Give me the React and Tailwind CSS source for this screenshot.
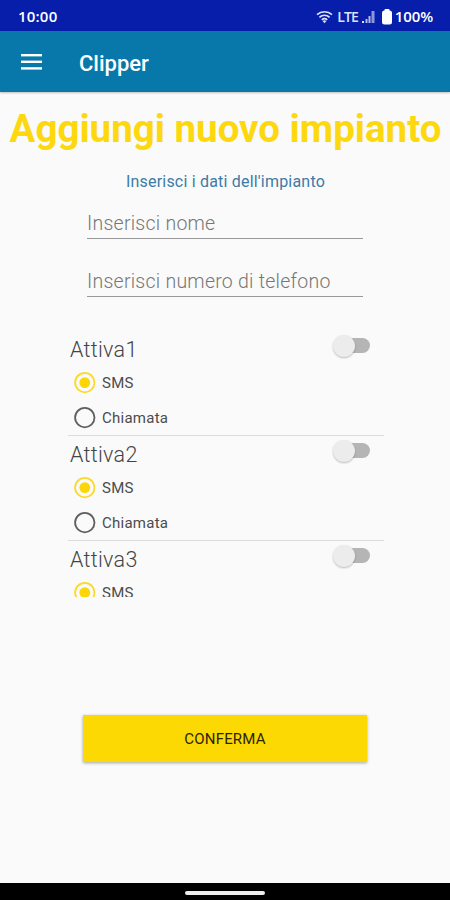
import { useState } from "react";

const fields = [
  { id: "nome", placeholder: "Inserisci nome" },
  { id: "telefono", placeholder: "Inserisci numero di telefono" },
];

const outputs = ["Attiva1", "Attiva2", "Attiva3"];

const StatusBar = () => (
  <div className="flex h-[31px] shrink-0 items-center bg-[#071eab] pt-[2px] pr-[17px] pl-[18px] font-['Open_Sans',sans-serif] text-[15px] font-semibold text-white">
    <span className="tracking-[0.2px]">10:00</span>
    <div className="ml-auto flex items-center">
      <svg className="h-[14px] w-[17px]" viewBox="0 0 17 14" fill="none">
        <path
          d="M1 4.6C5.2 .8 11.8 .8 16 4.6M3.4 7.3C6.4 4.7 10.6 4.7 13.6 7.3M5.8 9.8C7.4 8.5 9.6 8.5 11.2 9.8"
          stroke="#dfe2f8"
          strokeWidth="1.7"
        />
        <path d="M6.6 11L8.5 13.2L10.4 11Q8.5 9.6 6.6 11Z" fill="#dfe2f8" />
      </svg>
      <span className="ml-[4px] text-[14px] tracking-[-1px] text-[#dfe2f8]">
        LTE
      </span>
      <svg className="ml-[4px] h-[14px] w-[13px]" viewBox="0 0 13 14">
        <path d="M0 11h2v2H0z" fill="#dfe2f8" />
        <path d="M3.5 9h2v4h-2zM6.5 6h2v7h-2z" fill="#b4baec" />
        <path d="M9.5 1h3v12h-3z" fill="#8e96de" />
      </svg>
      <svg className="ml-[7px] h-[16px] w-[10px]" viewBox="0 0 10 16">
        <rect x="2.5" y="0" width="5" height="3" rx="1" fill="white" />
        <rect x="0" y="1.5" width="10" height="14" rx="2.5" fill="white" />
      </svg>
      <span className="ml-[3px] tracking-[-0.1px]">100%</span>
    </div>
  </div>
);

const AppBar = () => (
  <header className="flex h-[61px] shrink-0 items-center bg-[#0778a9] pl-[21px] shadow-[0_1px_2px_rgba(0,0,0,0.25)]">
    <button type="button" aria-label="Menu">
      <svg className="h-[16px] w-[21px]" viewBox="0 0 21 16" fill="white">
        <rect y="0" width="21" height="2.4" />
        <rect y="6.6" width="21" height="2.4" />
        <rect y="13.2" width="21" height="2.4" />
      </svg>
    </button>
    <h1 className="mt-[3px] ml-[37px] text-[22px] font-medium text-white">
      Clipper
    </h1>
  </header>
);

const RadioOption = ({ label, checked, onClick }) => (
  <button
    type="button"
    role="radio"
    aria-checked={checked}
    className="flex h-[35px] items-center pl-[6px]"
    onClick={onClick}
  >
    <svg className="size-[22px]" viewBox="0 0 22 22">
      <circle
        cx="10.8"
        cy="10.6"
        r="9.7"
        fill="none"
        stroke={checked ? "#fdd92a" : "#5f5f5f"}
        strokeWidth="1.8"
      />
      {checked && <circle cx="10.8" cy="10.6" r="5.4" fill="#fdd60a" />}
    </svg>
    <span className="mt-[2px] ml-[6px] text-[15px] tracking-[0.25px] text-[#4c4c4c]">
      {label}
    </span>
  </button>
);

const Switch = ({ on, onClick }) => (
  <button
    type="button"
    role="switch"
    aria-checked={on}
    className={`flex h-[15px] w-[34px] items-center rounded-full ${
      on ? "justify-end bg-[#fdd92a]" : "bg-[#b5b5b5]"
    }`}
    onClick={onClick}
  >
    <span className="-ml-[3px] size-[22px] shrink-0 rounded-full bg-[#ececec] shadow-[0_1px_2px_rgba(0,0,0,0.25)]" />
  </button>
);

const OutputRow = ({ name }) => {
  const [mode, setMode] = useState("SMS");
  const [on, setOn] = useState(false);

  return (
    <li className="h-[105px] border-b border-[#dcdcdc]">
      <div className="flex h-[34px] items-start justify-between pr-[14px] pl-[2px]">
        <span className="mt-[4px] text-[21.5px] leading-[30px] font-light tracking-[0.3px] text-[#444]">
          {name}
        </span>
        <div className="mt-[7px]">
          <Switch on={on} onClick={() => setOn(!on)} />
        </div>
      </div>
      <div role="radiogroup" aria-label={name}>
        {["SMS", "Chiamata"].map((option) => (
          <RadioOption
            key={option}
            label={option}
            checked={mode === option}
            onClick={() => setMode(option)}
          />
        ))}
      </div>
    </li>
  );
};

export default function App() {
  return (
    <div className="flex h-[900px] w-[450px] flex-col overflow-hidden bg-[#fafafa] font-[Roboto,sans-serif]">
      <StatusBar />
      <AppBar />
      <main className="flex flex-1 flex-col">
        <h2 className="mt-[14px] pl-[1px] text-center text-[38.5px] leading-[46px] font-bold whitespace-nowrap text-[#fed80f]">
          Aggiungi nuovo impianto
        </h2>
        <p className="mt-[20px] pl-[1px] text-center text-[16px] leading-[20px] tracking-[0.2px] text-[#3d7ba6]">
          Inserisci i dati dell'impianto
        </p>
        <form className="mt-[9px] ml-[87px] flex w-[276px] flex-col gap-[20px]">
          {fields.map(({ id, placeholder }) => (
            <input
              key={id}
              type="text"
              name={id}
              placeholder={placeholder}
              className="h-[38px] border-b-[1.5px] border-[#999] bg-transparent pt-[7px] text-[19.5px] font-light tracking-[0.25px] outline-none placeholder:text-[#777]"
            />
          ))}
        </form>
        <ul className="mt-[34px] ml-[68px] h-[266px] w-[316px] overflow-x-hidden overflow-y-auto [scrollbar-width:none]">
          {outputs.map((name) => (
            <OutputRow key={name} name={name} />
          ))}
        </ul>
        <button
          type="button"
          className="mt-[118px] ml-[83px] h-[47px] w-[284px] bg-[#fdd903] pt-[2px] text-[15px] tracking-[0.2px] text-[#2a2400] shadow-[0_1px_3px_rgba(0,0,0,0.35)]"
        >
          CONFERMA
        </button>
      </main>
      <div className="flex h-[17px] shrink-0 items-center justify-center bg-black">
        <div className="mt-[2px] h-[4px] w-[80px] rounded-full bg-[#eee]" />
      </div>
    </div>
  );
}
